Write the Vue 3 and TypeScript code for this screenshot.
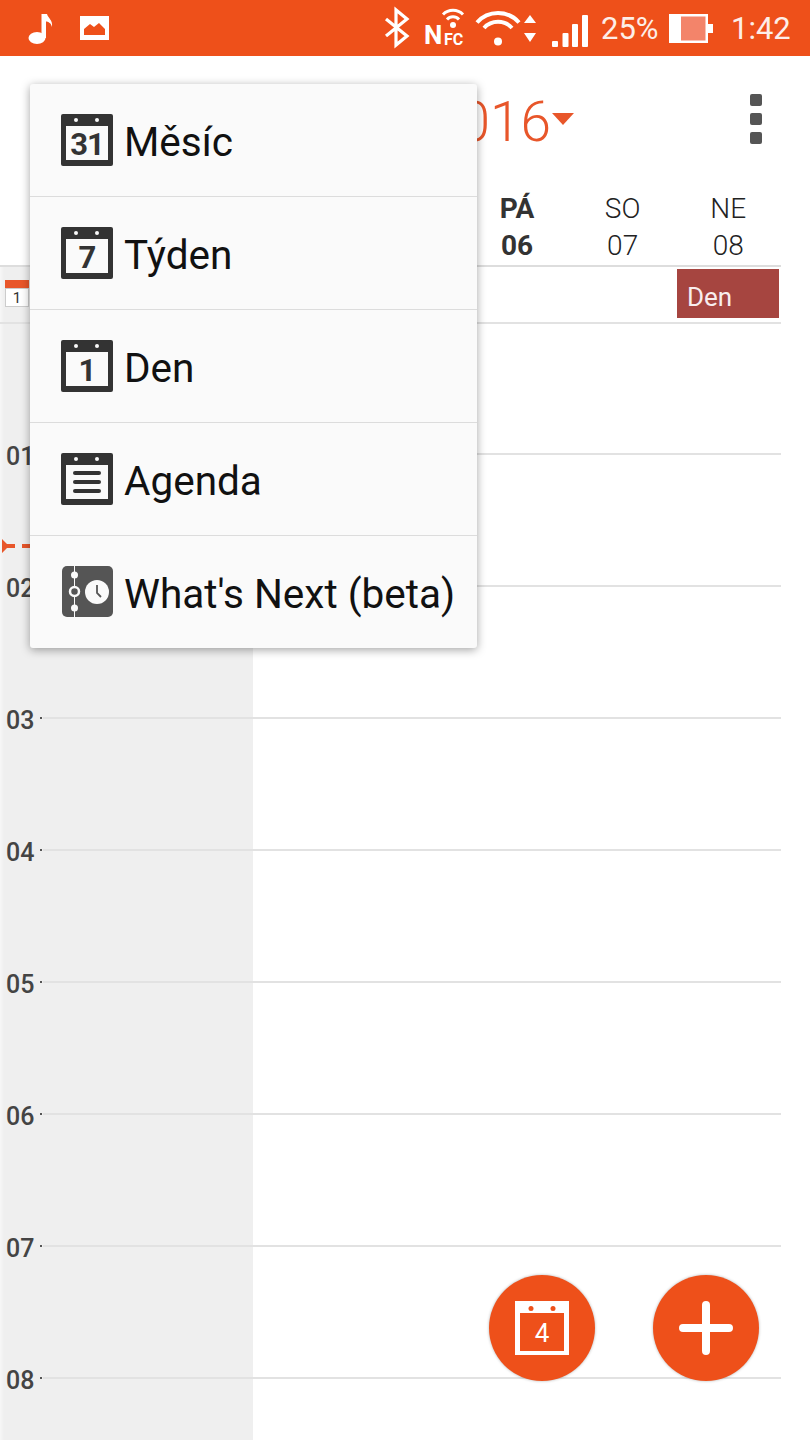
<script setup lang="ts">
// only the days not covered by the popup menu
const days = [
  { name: "PÁ", num: "06", today: true },
  { name: "SO", num: "07" },
  { name: "NE", num: "08" },
];

const hours = ["01", "02", "03", "04", "05", "06", "07", "08"];

const views = [
  { label: "Měsíc", num: "31", kind: "date" },
  { label: "Týden", num: "7", kind: "date" },
  { label: "Den", num: "1", kind: "date" },
  { label: "Agenda", num: "", kind: "agenda" },
  { label: "What's Next (beta)", num: "", kind: "next" },
];
</script>

<template>
  <div class="phone">
    <div class="status">
      <svg class="status__left" viewBox="20 0 95 56" width="95" height="56">
        <ellipse cx="37" cy="38" rx="8.5" ry="6" fill="#fff" />
        <rect x="41.5" y="14" width="4.5" height="24" fill="#fff" />
        <path d="M45 14h2c1 4 6 6 5 13-1-4-3-5-7-6z" fill="#fff" />
        <rect x="80" y="16" width="29" height="24" fill="#fff" />
        <path d="M84 29l6-5 4 3 5-4 6 6v6H84z" fill="#ee501a" />
      </svg>
      <svg class="status__icons" viewBox="380 0 215 56" width="215" height="56">
        <path d="M386 19l21 17-11 9V10l11 9-21 17" fill="none" stroke="#fff" stroke-width="3.2" />
        <text x="424" y="44" class="nfc nfc--big">N</text>
        <text x="444" y="45" class="nfc nfc--small">FC</text>
        <circle cx="453" cy="25" r="3" fill="#fff" />
        <path d="M447 19.500a8 8 0 0 1 12 0M443 14.500a14 14 0 0 1 20 0" fill="none" stroke="#fff" stroke-width="3" />
        <circle cx="498" cy="41.5" r="4" fill="#fff" />
        <path d="M484 28a19 19 0 0 1 28 0M477 22.5a28 28 0 0 1 42 0" fill="none" stroke="#fff" stroke-width="4" />
        <path d="M530 15l6 8h-12zM524 33h12l-6 9z" fill="#fff" />
        <rect x="552" y="41" width="6" height="6" rx="1" fill="#fff" />
        <rect x="562.500" y="33" width="6" height="14" rx="1" fill="#fff" />
        <rect x="572" y="24" width="6" height="23" rx="1" fill="#fff" />
        <rect x="582" y="15" width="6" height="32" rx="1" fill="#fff" />
      </svg>
      <span class="status__pct">25%</span>
      <svg class="status__battery" viewBox="0 0 44 29" width="44" height="29">
        <rect x="0" y="0" width="39" height="29" fill="#fff" />
        <rect x="12" y="2.500" width="24.500" height="24" fill="#f3846a" />
        <rect x="39" y="10" width="5" height="9" fill="#fff" />
      </svg>
      <span class="status__time">1:42</span>
    </div>

    <div class="toolbar">
      <div class="toolbar__title">2016</div>
      <div class="toolbar__caret"></div>
      <div class="toolbar__more">
        <span></span>
        <span></span>
        <span></span>
      </div>
    </div>

    <div class="week">
      <div
        v-for="day in days"
        :key="day.num"
        class="week__day"
        :class="{ 'week__day--today': day.today }"
      >
        <div>{{ day.name }}</div>
        <div>{{ day.num }}</div>
      </div>
    </div>

    <div class="sheet">
      <div class="allday">
        <div class="allday__gutter">
          <div class="mini-cal">
            <div class="mini-cal__top"></div>
            <div class="mini-cal__num">1</div>
          </div>
        </div>
        <div class="allday__event">Den</div>
      </div>

      <div class="hours">
        <div v-for="hour in hours" :key="hour" class="hour">
          <div class="hour__label">{{ hour }}</div>
          <div class="hour__line"></div>
        </div>
      </div>
    </div>

    <svg class="now" viewBox="0 0 30 14" width="30" height="14">
      <path d="M2 0l5 5h8v4H7l-5 5z" fill="#e8562a" />
      <rect x="22" y="5" width="8" height="4" fill="#e8562a" />
    </svg>

    <div class="menu">
      <div v-for="view in views" :key="view.label" class="menu__row">
        <svg class="menu__icon" viewBox="0 0 52 52" width="52" height="52">
          <template v-if="view.kind === 'next'">
            <rect x="1" y="0" width="51" height="51" rx="5" fill="#555" />
            <rect x="13" y="0" width="1" height="51" fill="#fafafa" />
            <circle cx="13.500" cy="9" r="3.500" fill="#fafafa" />
            <circle cx="13.500" cy="42" r="3.500" fill="#fafafa" />
            <circle cx="13.500" cy="25.500" r="4.500" fill="#555" stroke="#fafafa" stroke-width="2.500" />
            <circle cx="36" cy="26" r="12" fill="#fafafa" />
            <path d="M36 19v8l4 4" fill="none" stroke="#555" stroke-width="1.800" />
          </template>
          <template v-else>
            <rect x="0" y="0" width="52" height="52" rx="2" fill="#333" />
            <rect x="5" y="12" width="42" height="34" fill="#fafafa" />
            <circle cx="15" cy="6" r="2" fill="#fafafa" />
            <circle cx="36" cy="6" r="2" fill="#fafafa" />
            <text v-if="view.kind === 'date'" x="26" y="41" class="menu__num">{{ view.num }}</text>
            <template v-else>
              <rect x="12" y="18" width="28" height="4" rx="2" fill="#333" />
              <rect x="12" y="27" width="28" height="4" rx="2" fill="#333" />
              <rect x="12" y="36" width="28" height="4" rx="2" fill="#333" />
            </template>
          </template>
        </svg>
        <span class="menu__label">{{ view.label }}</span>
      </div>
    </div>

    <div class="fabs">
      <div class="fab">
        <svg viewBox="0 0 54 54" width="54" height="54">
          <path
            fill-rule="evenodd"
            d="M0 0h54v54H0zM5 12v38h44V12z"
            fill="#fff"
          />
          <circle cx="16" cy="7.500" r="2.500" fill="#ee501a" />
          <circle cx="38" cy="7.500" r="2.500" fill="#ee501a" />
          <text x="27" y="41" class="fab__num">4</text>
        </svg>
      </div>
      <div class="fab">
        <svg viewBox="0 0 54 54" width="54" height="54">
          <path d="M27 4v46M4 27h46" stroke="#fff" stroke-width="8" stroke-linecap="round" />
        </svg>
      </div>
    </div>
  </div>
</template>

<style>
html,
body {
  margin: 0;
  background: #fff;
}
</style>

<style scoped>
.phone {
  position: relative;
  width: 810px;
  height: 1440px;
  overflow: hidden;
  background: #fff;
  font-family: Roboto, "Liberation Sans", sans-serif;
}

.status {
  display: flex;
  align-items: center;
  height: 56px;
  padding-left: 20px;
  background: #ee501a;
  color: #fdeee8;
  font-size: 31px;
}
.status__left {
  flex: none;
}
.status__icons {
  flex: none;
  margin-left: 265px;
}
.status__pct {
  margin-left: 6px;
  width: 68px;
}
.status__battery {
  flex: none;
}
.status__time {
  margin-left: 18px;
}
.nfc {
  fill: #fff;
  font-weight: 700;
}
.nfc--big {
  font-size: 26px;
}
.nfc--small {
  font-size: 16px;
}

.toolbar {
  display: flex;
  align-items: center;
  height: 126px;
  width: 810px;
  box-sizing: border-box;
  padding-right: 48px;
}
.toolbar__title {
  margin-left: auto;
  padding-top: 6px;
  font-size: 55px;
  font-weight: 300;
  color: #e8562a;
}
.toolbar__caret {
  margin: 0 176px 0 1px;
  width: 0;
  height: 0;
  border-left: 11px solid transparent;
  border-right: 11px solid transparent;
  border-top: 12px solid #e8562a;
}
.toolbar__more {
  display: flex;
  flex-direction: column;
  gap: 7px;
}
.toolbar__more span {
  width: 12px;
  height: 12px;
  border-radius: 2px;
  background: #555;
}

.week {
  display: grid;
  grid-template-columns: 42px repeat(7, 1fr);
  box-sizing: border-box;
  width: 781px;
  height: 85px;
  padding-top: 8px;
  border-bottom: 2px solid #ddd;
  font-size: 28px;
  font-weight: 300;
  line-height: 37px;
  color: #222;
  text-align: center;
}
.week__day:first-child {
  grid-column-start: 6;
}
.week__day--today {
  font-weight: 700;
  color: #333;
}

.sheet {
  height: 1173px;
  background: linear-gradient(to right, #f7f7f7 0, #efefef 4px, #efefef 253px, #fff 253px);
}

.allday {
  display: flex;
  justify-content: space-between;
  box-sizing: border-box;
  width: 781px;
  height: 57px;
  padding: 2px 2px 2px 5px;
  border-bottom: 2px solid #e2e2e2;
}
.mini-cal {
  width: 24px;
  margin-top: 11px;
}
.mini-cal__top {
  height: 8px;
  background: #e8562a;
}
.mini-cal__num {
  height: 19px;
  background: #fff;
  border: 1px solid #ccc;
  box-sizing: border-box;
  font-size: 15px;
  line-height: 18px;
  text-align: center;
  color: #333;
}
.allday__event {
  width: 102px;
  height: 49px;
  box-sizing: border-box;
  padding: 13px 0 0 10px;
  background: #a64540;
  color: #f8eeee;
  font-size: 26px;
  line-height: 30px;
}

.hours {
  width: 781px;
  padding-top: 119px;
}
.hour {
  display: flex;
  align-items: flex-start;
  height: 132px;
  padding-left: 6px;
  box-sizing: border-box;
}
.hour__label {
  width: 37px;
  flex: none;
  font-size: 25px;
  font-weight: 500;
  line-height: 28px;
  color: #444;
}
.hour__line {
  position: relative;
  flex: 1;
  height: 2px;
  margin-top: 10px;
  background: #e2e2e2;
}
.hour__line::before {
  content: "";
  position: absolute;
  left: -3px;
  top: 0;
  width: 2px;
  height: 2px;
  background: #555;
}

.now {
  position: absolute;
  left: 0;
  top: 539px;
}

.menu {
  position: absolute;
  left: 30px;
  top: 84px;
  width: 447px;
  background: #fafafa;
  border-radius: 3px;
  box-shadow: 0 2px 10px rgba(0, 0, 0, 0.36);
}
.menu__row {
  display: flex;
  align-items: center;
  gap: 11px;
  box-sizing: border-box;
  height: 113px;
  padding: 0 0 0 31px;
  border-bottom: 1px solid #dcdcdc;
  font-size: 40.500px;
  color: #111;
}
.menu__row:last-child {
  height: 112px;
  border-bottom: 0;
}
.menu__label {
  padding-top: 3px;
}
.menu__icon {
  flex: none;
}
.menu__num {
  font-size: 31px;
  font-weight: 700;
  letter-spacing: -1px;
  fill: #333;
  text-anchor: middle;
}

.fabs {
  position: absolute;
  left: 489px;
  top: 1275px;
  display: flex;
  gap: 58px;
}
.fab {
  display: flex;
  align-items: center;
  justify-content: center;
  width: 106px;
  height: 106px;
  border-radius: 50%;
  background: #ee501a;
  box-shadow: 0 0 3px rgba(0, 0, 0, 0.3);
}
.fab__num {
  font-size: 26px;
  fill: #fff;
  text-anchor: middle;
}
</style>
